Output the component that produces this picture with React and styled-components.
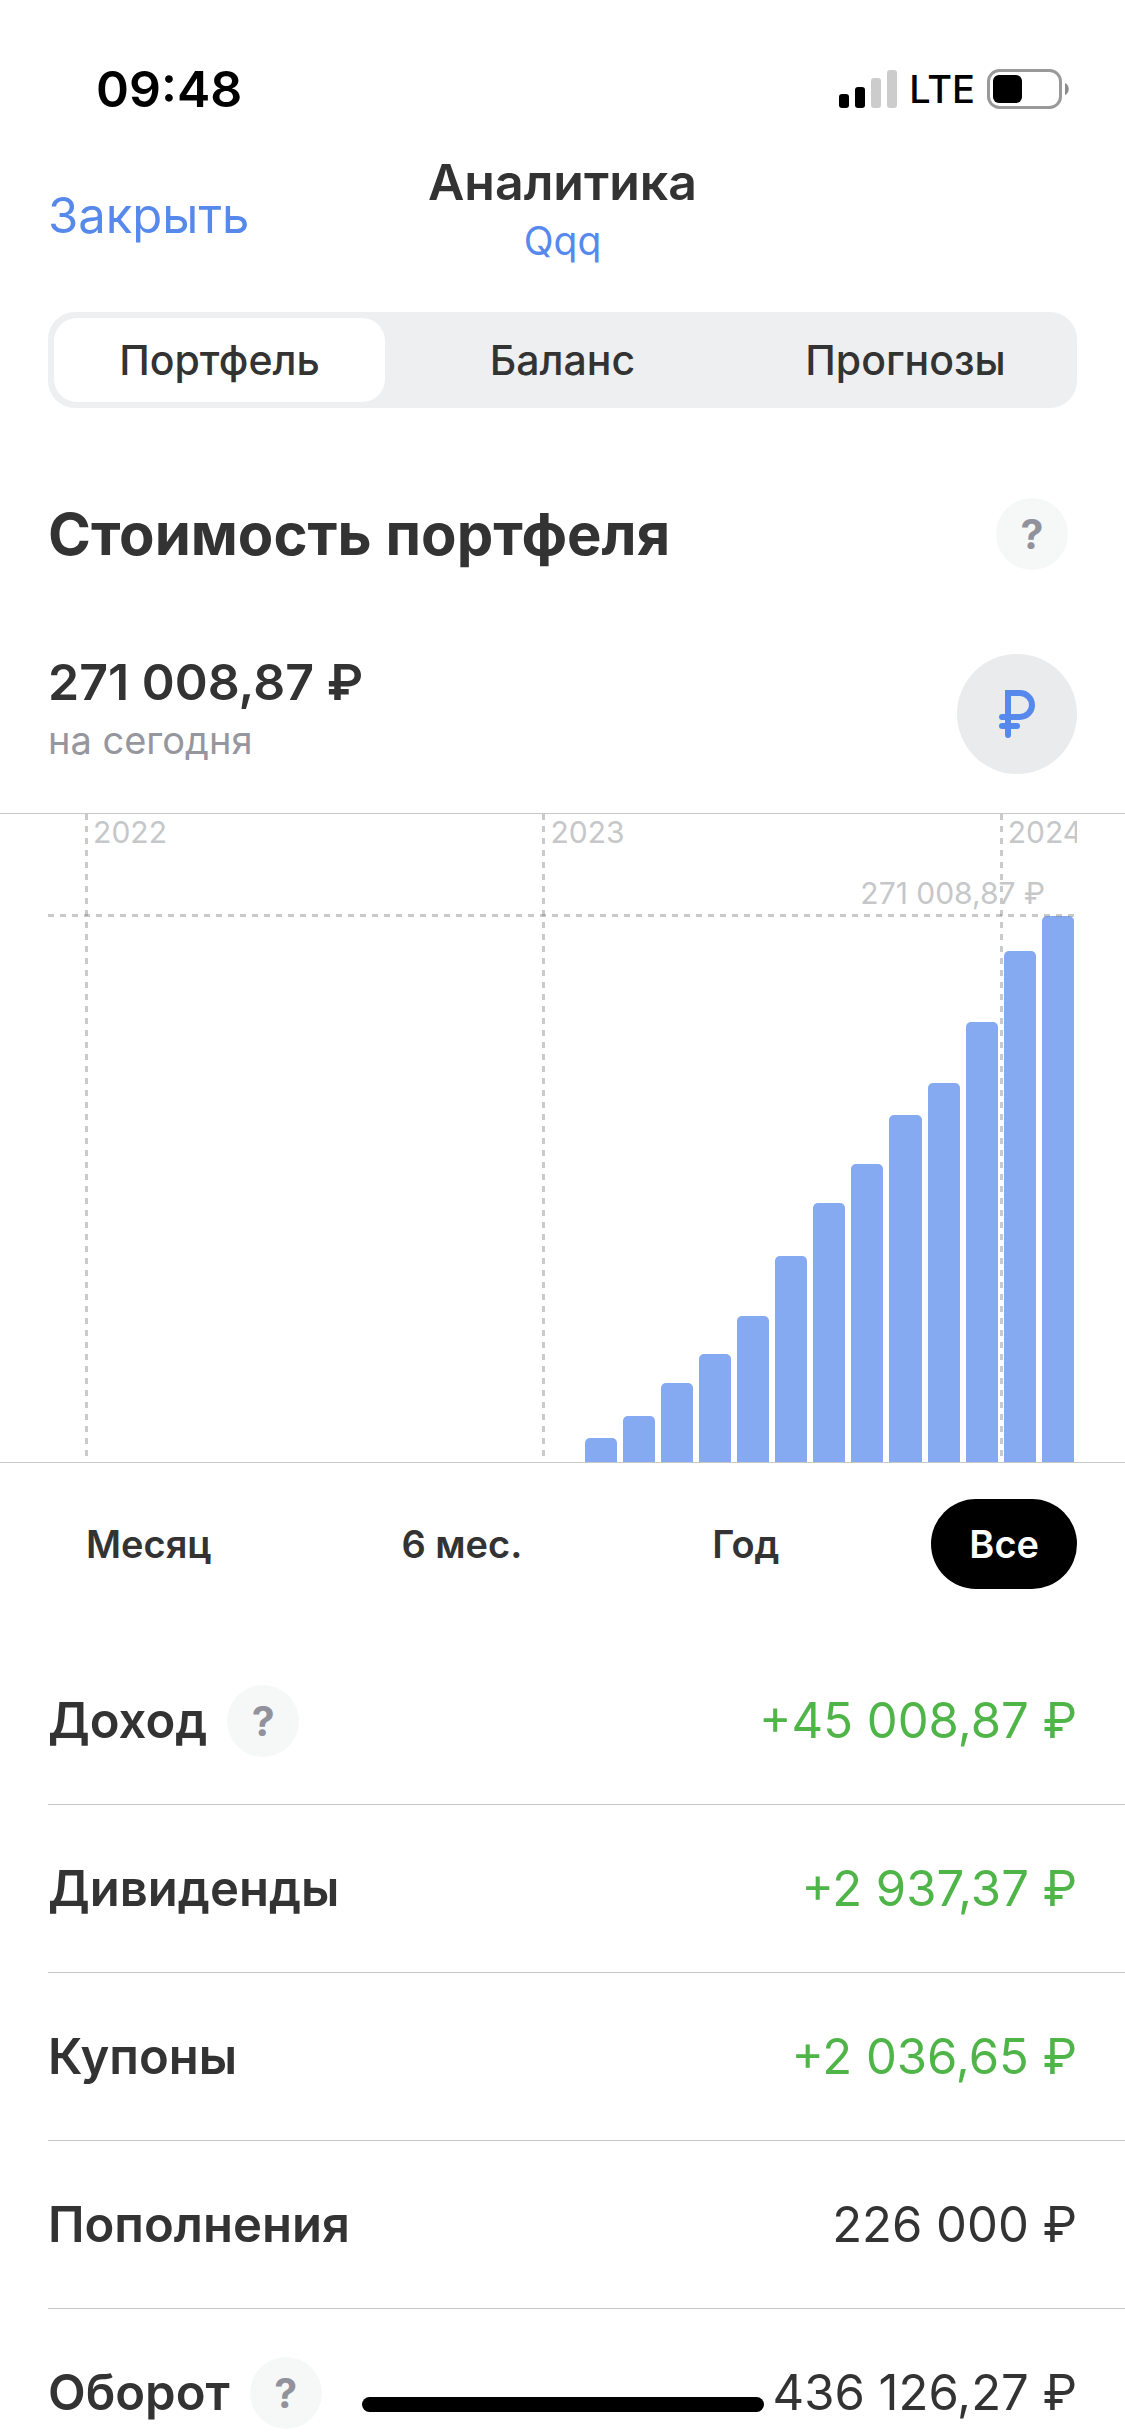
import React, { useState } from "react";
import styled, { createGlobalStyle } from "styled-components";

const GlobalStyle = createGlobalStyle`
  * {
    box-sizing: border-box;
  }

  body {
    margin: 0;
    background: #fff;
    color: #333;
    font-family: Inter, "Liberation Sans", sans-serif;
  }

  button {
    margin: 0;
    padding: 0;
    border: 0;
    background: none;
    color: inherit;
    font: inherit;
    cursor: pointer;
  }
`;

const Screen = styled.div`
  display: flex;
  flex-direction: column;
  min-height: 100vh;
  overflow: hidden;
`;

const StatusBar = styled.div`
  display: flex;
  align-items: center;
  justify-content: space-between;
  padding: 59px 56px 33px 96px;
  color: #000;
`;

const Time = styled.div`
  font-size: 50px;
  font-weight: 600;
  line-height: 60px;
`;

const StatusIcons = styled.div`
  display: flex;
  align-items: center;
  gap: 12px;
`;

const Network = styled.span`
  font-size: 38px;
  font-weight: 500;
  line-height: 60px;
`;

const Header = styled.header`
  display: grid;
  grid-template-columns: 1fr auto 1fr;
  align-items: center;
  padding: 0 48px;
`;

const CloseButton = styled.button`
  justify-self: start;
  color: #5789ec;
  font-size: 49px;
  line-height: 60px;
`;

const Titles = styled.div`
  display: flex;
  flex-direction: column;
  align-items: center;
  padding-bottom: 10px;
`;

const Title = styled.h1`
  margin: 0;
  font-size: 50px;
  font-weight: 600;
  line-height: 60px;
`;

const Subtitle = styled.button`
  color: #5789ec;
  font-size: 39px;
  line-height: 58px;
`;

const Tabs = styled.div`
  display: grid;
  grid-template-columns: repeat(3, 1fr);
  margin: 32px 48px 0;
  border-radius: 27px;
  background: #eeeff1;
`;

const Tab = styled.button`
  margin: 6px;
  border-radius: 23px;
  background: ${(props) => (props.$active ? "#fff" : "transparent")};
  font-size: 41px;
  font-weight: 500;
  line-height: 84px;
`;

const SectionHead = styled.div`
  display: flex;
  align-items: center;
  justify-content: space-between;
  padding: 90px 57px 0 48px;
`;

const SectionTitle = styled.h2`
  margin: 0;
  font-size: 58px;
  font-weight: 700;
  line-height: 72px;
`;

const HelpButton = styled.button`
  flex: none;
  width: 72px;
  height: 72px;
  border-radius: 50%;
  background: #f6f8f8;
  color: #92929c;
  font-size: 41px;
  font-weight: 700;
  line-height: 72px;
`;

const Balance = styled.div`
  display: flex;
  justify-content: space-between;
  padding: 84px 48px 39px;
`;

const Amount = styled.div`
  font-size: 50px;
  font-weight: 600;
  line-height: 56px;
`;

const AmountNote = styled.div`
  color: #96969e;
  font-size: 38px;
  line-height: 60px;
`;

const CurrencyButton = styled.button`
  display: flex;
  align-items: center;
  justify-content: center;
  width: 120px;
  height: 120px;
  border-radius: 50%;
  background: #e9ebec;
`;

const Chart = styled.div`
  padding: 0 48px;
  border-top: 1px solid #c6c7c9;
  border-bottom: 1px solid #c6c7c9;
`;

const Plot = styled.div`
  position: relative;
  display: grid;
  grid-template-columns: repeat(27, 1fr);
  align-items: end;
  height: 648px;
  overflow: hidden;
`;

const Bar = styled.div`
  margin: 0 3px;
  border-radius: 5px 5px 0 0;
  background: #85aaf2;
`;

const YearMark = styled.div`
  position: absolute;
  top: 0;
  bottom: 0;
  margin-left: -1px;
  padding-left: 8px;
  background: repeating-linear-gradient(#c9cacb 0 6px, transparent 6px 12px) left
    top / 3px 100% no-repeat;
  color: #c6c7c9;
  font-size: 30px;
  line-height: 36px;
  white-space: nowrap;
`;

const MaxLine = styled.div`
  position: absolute;
  right: 3px;
  bottom: 545px;
  left: 0;
  height: 3px;
  background: repeating-linear-gradient(
    90deg,
    rgba(120, 120, 124, 0.4) 0 6px,
    transparent 6px 12px
  );
`;

const MaxLabel = styled.div`
  position: absolute;
  right: 32px;
  bottom: 551px;
  color: #c6c7c9;
  font-size: 30px;
  line-height: 36px;
`;

const Periods = styled.div`
  display: flex;
  justify-content: space-between;
  padding: 36px 48px 48px;
`;

const Period = styled.button`
  padding: 0 38px;
  border-radius: 45px;
  background: ${(props) => (props.$active ? "#000" : "transparent")};
  color: ${(props) => (props.$active ? "#fff" : "#333")};
  font-size: 38px;
  font-weight: 600;
  line-height: 90px;
`;

const Stats = styled.dl`
  margin: 0;
  padding-left: 48px;
`;

const StatRow = styled.div`
  display: flex;
  align-items: center;
  justify-content: space-between;
  padding: 48px 48px 47px 0;
  border-bottom: 1px solid #c6c7c9;

  &:last-child {
    padding-bottom: 0;
    border-bottom: 0;
  }
`;

const StatName = styled.dt`
  display: flex;
  align-items: center;
  gap: 20px;
  font-size: 49px;
  font-weight: 600;
  line-height: 72px;
`;

const StatValue = styled.dd`
  margin: 0;
  color: ${(props) => (props.$positive ? "#50b548" : "#333")};
  font-size: 49px;
  line-height: 72px;
`;

const HomeIndicator = styled.div`
  position: fixed;
  bottom: 24px;
  left: 50%;
  width: 402px;
  height: 15px;
  margin-left: -201px;
  border-radius: 8px;
  background: #000;
`;

const MONTHS = 27;

const tabs = ["Портфель", "Баланс", "Прогнозы"];
const periods = ["Месяц", "6 мес.", "Год", "Все"];

const years = [
  { year: 2022, month: 1 },
  { year: 2023, month: 13 },
  { year: 2024, month: 25 },
];

const bars = [24, 46, 79, 108, 146, 206, 259, 298, 347, 379, 440, 511, 546];

const stats = [
  { name: "Доход", value: "+45 008,87 ₽", positive: true, help: true },
  { name: "Дивиденды", value: "+2 937,37 ₽", positive: true },
  { name: "Купоны", value: "+2 036,65 ₽", positive: true },
  { name: "Пополнения", value: "226 000 ₽" },
  { name: "Оборот", value: "436 126,27 ₽", help: true },
];

const SignalIcon = () => (
  <svg width="58" height="38" viewBox="0 0 58 38" aria-hidden="true">
    <rect x="0" y="24" width="10" height="14" rx="3" />
    <rect x="16" y="17" width="10" height="21" rx="3" />
    <rect x="32" y="8" width="10" height="30" rx="3" fill="#ccc" />
    <rect x="48" y="0" width="10" height="38" rx="3" fill="#ccc" />
  </svg>
);

const BatteryIcon = () => (
  <svg width="82" height="40" viewBox="0 0 82 40" aria-hidden="true">
    <rect
      x="1.5"
      y="1.5"
      width="72"
      height="37"
      rx="11"
      fill="none"
      stroke="#999"
      strokeWidth="3"
    />
    <rect x="6" y="6" width="29" height="28" rx="6" />
    <path d="M78 14c5 2 5 10 0 12z" fill="#8c8c8c" />
  </svg>
);

const RubleIcon = () => (
  <svg
    width="36"
    height="48"
    viewBox="0 0 36 48"
    fill="none"
    stroke="#5789ec"
    strokeWidth="6"
    strokeLinecap="round"
    aria-hidden="true"
  >
    <path d="M9 45V3h12a12 12 0 0 1 0 24H3" />
    <path d="M3 36h15" />
  </svg>
);

const App = () => {
  const [tab, setTab] = useState("Портфель");
  const [period, setPeriod] = useState("Все");

  return (
    <Screen>
      <GlobalStyle />
      <StatusBar>
        <Time>09:48</Time>
        <StatusIcons>
          <SignalIcon />
          <Network>LTE</Network>
          <BatteryIcon />
        </StatusIcons>
      </StatusBar>

      <Header>
        <CloseButton>Закрыть</CloseButton>
        <Titles>
          <Title>Аналитика</Title>
          <Subtitle>Qqq</Subtitle>
        </Titles>
      </Header>

      <Tabs>
        {tabs.map((name) => (
          <Tab key={name} $active={name === tab} onClick={() => setTab(name)}>
            {name}
          </Tab>
        ))}
      </Tabs>

      <SectionHead>
        <SectionTitle>Стоимость портфеля</SectionTitle>
        <HelpButton>?</HelpButton>
      </SectionHead>

      <Balance>
        <div>
          <Amount>271 008,87 ₽</Amount>
          <AmountNote>на сегодня</AmountNote>
        </div>
        <CurrencyButton aria-label="Валюта">
          <RubleIcon />
        </CurrencyButton>
      </Balance>

      <Chart>
        <Plot>
          {years.map(({ year, month }) => (
            <YearMark key={year} style={{ left: `${(month / MONTHS) * 100}%` }}>
              {year}
            </YearMark>
          ))}
          {bars.map((height, i) => (
            <Bar
              key={i}
              style={{ height, gridColumn: MONTHS - bars.length + i + 1 }}
            />
          ))}
          <MaxLabel>271 008,87 ₽</MaxLabel>
          <MaxLine />
        </Plot>
      </Chart>

      <Periods>
        {periods.map((name) => (
          <Period
            key={name}
            $active={name === period}
            onClick={() => setPeriod(name)}
          >
            {name}
          </Period>
        ))}
      </Periods>

      <Stats>
        {stats.map(({ name, value, positive, help }) => (
          <StatRow key={name}>
            <StatName>
              {name}
              {help && <HelpButton>?</HelpButton>}
            </StatName>
            <StatValue $positive={positive}>{value}</StatValue>
          </StatRow>
        ))}
      </Stats>

      <HomeIndicator />
    </Screen>
  );
};

export default App;
